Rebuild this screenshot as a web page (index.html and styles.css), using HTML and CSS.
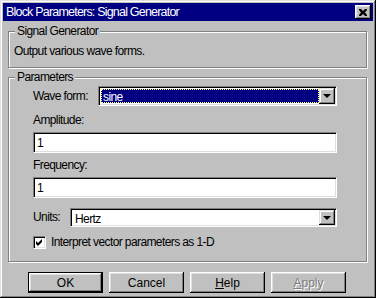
FILE: index.html
```html
<!DOCTYPE html>
<html lang="en">
<head>
  <meta charset="UTF-8">
  <title>Block Parameters: Signal Generator</title>
  <link rel="stylesheet" href="styles.css">
</head>
<body>
  <div class="window">
    <div class="titlebar">
      <span class="title">Block Parameters: Signal Generator</span>
      <button class="close" aria-label="Close">
        <svg width="8" height="7" viewBox="0 0 8 7">
          <path d="M0 0h2l2 2 2-2h2v1L6 3.5 8 6v1H6L4 5 2 7H0V6l2-2.5L0 1z" fill="#000"/>
        </svg>
      </button>
    </div>

    <div class="body">
      <div class="group info">
        <span class="legend">Signal Generator</span>
        <p class="desc">Output various wave forms.</p>
      </div>

      <div class="group params">
        <span class="legend">Parameters</span>

        <div class="row wave">
          <span class="label wave-label">Wave form:</span>
          <div class="field combo">
            <span class="value selected">sine</span>
            <span class="drop"><i class="arrow"></i></span>
          </div>
        </div>

        <div class="label stack">Amplitude:</div>
        <div class="field text">1</div>

        <div class="label stack">Frequency:</div>
        <div class="field text">1</div>

        <div class="row units">
          <span class="label units-label">Units:</span>
          <div class="field combo">
            <span class="value">Hertz</span>
            <span class="drop"><i class="arrow"></i></span>
          </div>
        </div>

        <label class="check">
          <span class="box">
            <svg width="7" height="7" viewBox="0 0 7 7">
              <path d="M6 0v3L2 7H2L0 5V2l2 2z" fill="#000"/>
            </svg>
          </span>
          Interpret vector parameters as 1-D
        </label>
      </div>

      <div class="buttons">
        <button class="btn default">OK</button>
        <button class="btn">Cancel</button>
        <button class="btn"><u>H</u>elp</button>
        <button class="btn disabled"><u>A</u>pply</button>
      </div>
    </div>
  </div>
</body>
</html>
```

FILE: styles.css
```css
* {
  margin: 0;
  padding: 0;
  box-sizing: border-box;
}

body {
  font-family: "Liberation Sans", Arial, sans-serif;
  font-size: 12px;
  letter-spacing: -0.6px;
  color: #000;
  background: #c0c0c0;
}

.window {
  width: 376px;
  height: 298px;
  padding: 3px;
  background: #c0c0c0;
  box-shadow: inset -1px -1px #000, inset 1px 1px #dfdfdf,
              inset -2px -2px #808080, inset 2px 2px #fff;
}

.titlebar {
  height: 18px;
  background: #000080;
  color: #fff;
  display: flex;
  align-items: center;
  padding: 0 2px 0 3px;
}

.title {
  flex: 1;
  font-size: 12.5px;
  letter-spacing: -0.8px;
  line-height: 18px;
}

.close {
  width: 16px;
  height: 14px;
  border: none;
  background: #c0c0c0;
  display: flex;
  align-items: center;
  justify-content: center;
  box-shadow: inset -1px -1px #000, inset 1px 1px #fff,
              inset -2px -2px #808080, inset 2px 2px #dfdfdf;
}

.body {
  padding: 10px 6px 0 5px;
}

.group {
  border: 1px solid #808080;
  box-shadow: inset 1px 1px #fff, 1px 1px #fff;
}

.legend {
  display: block;
  width: fit-content;
  margin: -8px 0 0 6px;
  padding: 0 2px;
  line-height: 15px;
  background: #c0c0c0;
}

.info {
  padding: 0 0 8px 5px;
}

.info .legend {
  margin-left: 1px;
}

.desc {
  margin-top: 5px;
  line-height: 15px;
}

.params {
  margin-top: 9px;
  padding: 0 29px 11px 24px;
}

.params .legend {
  margin-left: -18px;
}

.row {
  display: flex;
  align-items: center;
}

.wave {
  margin-top: 1px;
}

.wave-label {
  width: 65px;
  white-space: nowrap;
}

.units-label {
  width: 37px;
}

.units {
  margin-top: 10px;
}

.label {
  line-height: 15px;
}

.stack {
  margin-top: 7px;
  margin-bottom: 4px;
}

.field {
  background: #fff;
  border: 1px solid;
  border-color: #808080 #fff #fff #808080;
  box-shadow: inset 1px 1px #000, inset -1px -1px #dfdfdf;
}

.text {
  height: 21px;
  padding: 1px 0 0 3px;
  line-height: 18px;
}

.stack + .text + .stack {
  margin-top: 5px;
}

.combo {
  flex: 1;
  height: 20px;
  padding: 1px;
  display: flex;
}

.units .combo {
  height: 19px;
}

.value {
  flex: 1;
  line-height: 16px;
  padding-left: 2px;
  margin: 1px 0 1px 1px;
}

.selected {
  background: #000080;
  color: #fff;
  outline: 1px dotted #ffff80;
  outline-offset: -1px;
}

.drop {
  width: 16px;
  background: #c0c0c0;
  display: flex;
  align-items: center;
  justify-content: center;
  box-shadow: inset -1px -1px #000, inset 1px 1px #dfdfdf,
              inset -2px -2px #808080, inset 2px 2px #fff;
}

.arrow {
  width: 0;
  height: 0;
  border-left: 4px solid transparent;
  border-right: 4px solid transparent;
  border-top: 4px solid #000;
}

.check {
  display: flex;
  align-items: center;
  gap: 5px;
  margin-top: 8px;
  line-height: 15px;
}

.box {
  width: 13px;
  height: 13px;
  background: #fff;
  border: 1px solid;
  border-color: #808080 #fff #fff #808080;
  box-shadow: inset 1px 1px #000, inset -1px -1px #dfdfdf;
  display: flex;
  align-items: center;
  justify-content: center;
}

.buttons {
  margin-top: 10px;
  display: flex;
  justify-content: center;
  gap: 6px;
  padding-right: 1px;
}

.btn {
  width: 75px;
  height: 21px;
  border: none;
  background: #c0c0c0;
  font: inherit;
  color: #000;
  box-shadow: inset -1px -1px #000, inset 1px 1px #fff,
              inset -2px -2px #808080, inset 2px 2px #dfdfdf;
}

.btn u {
  text-decoration: underline;
}

.default {
  border: 1px solid #000;
}

.disabled {
  color: #808080;
  text-shadow: 1px 1px #fff;
}
```
